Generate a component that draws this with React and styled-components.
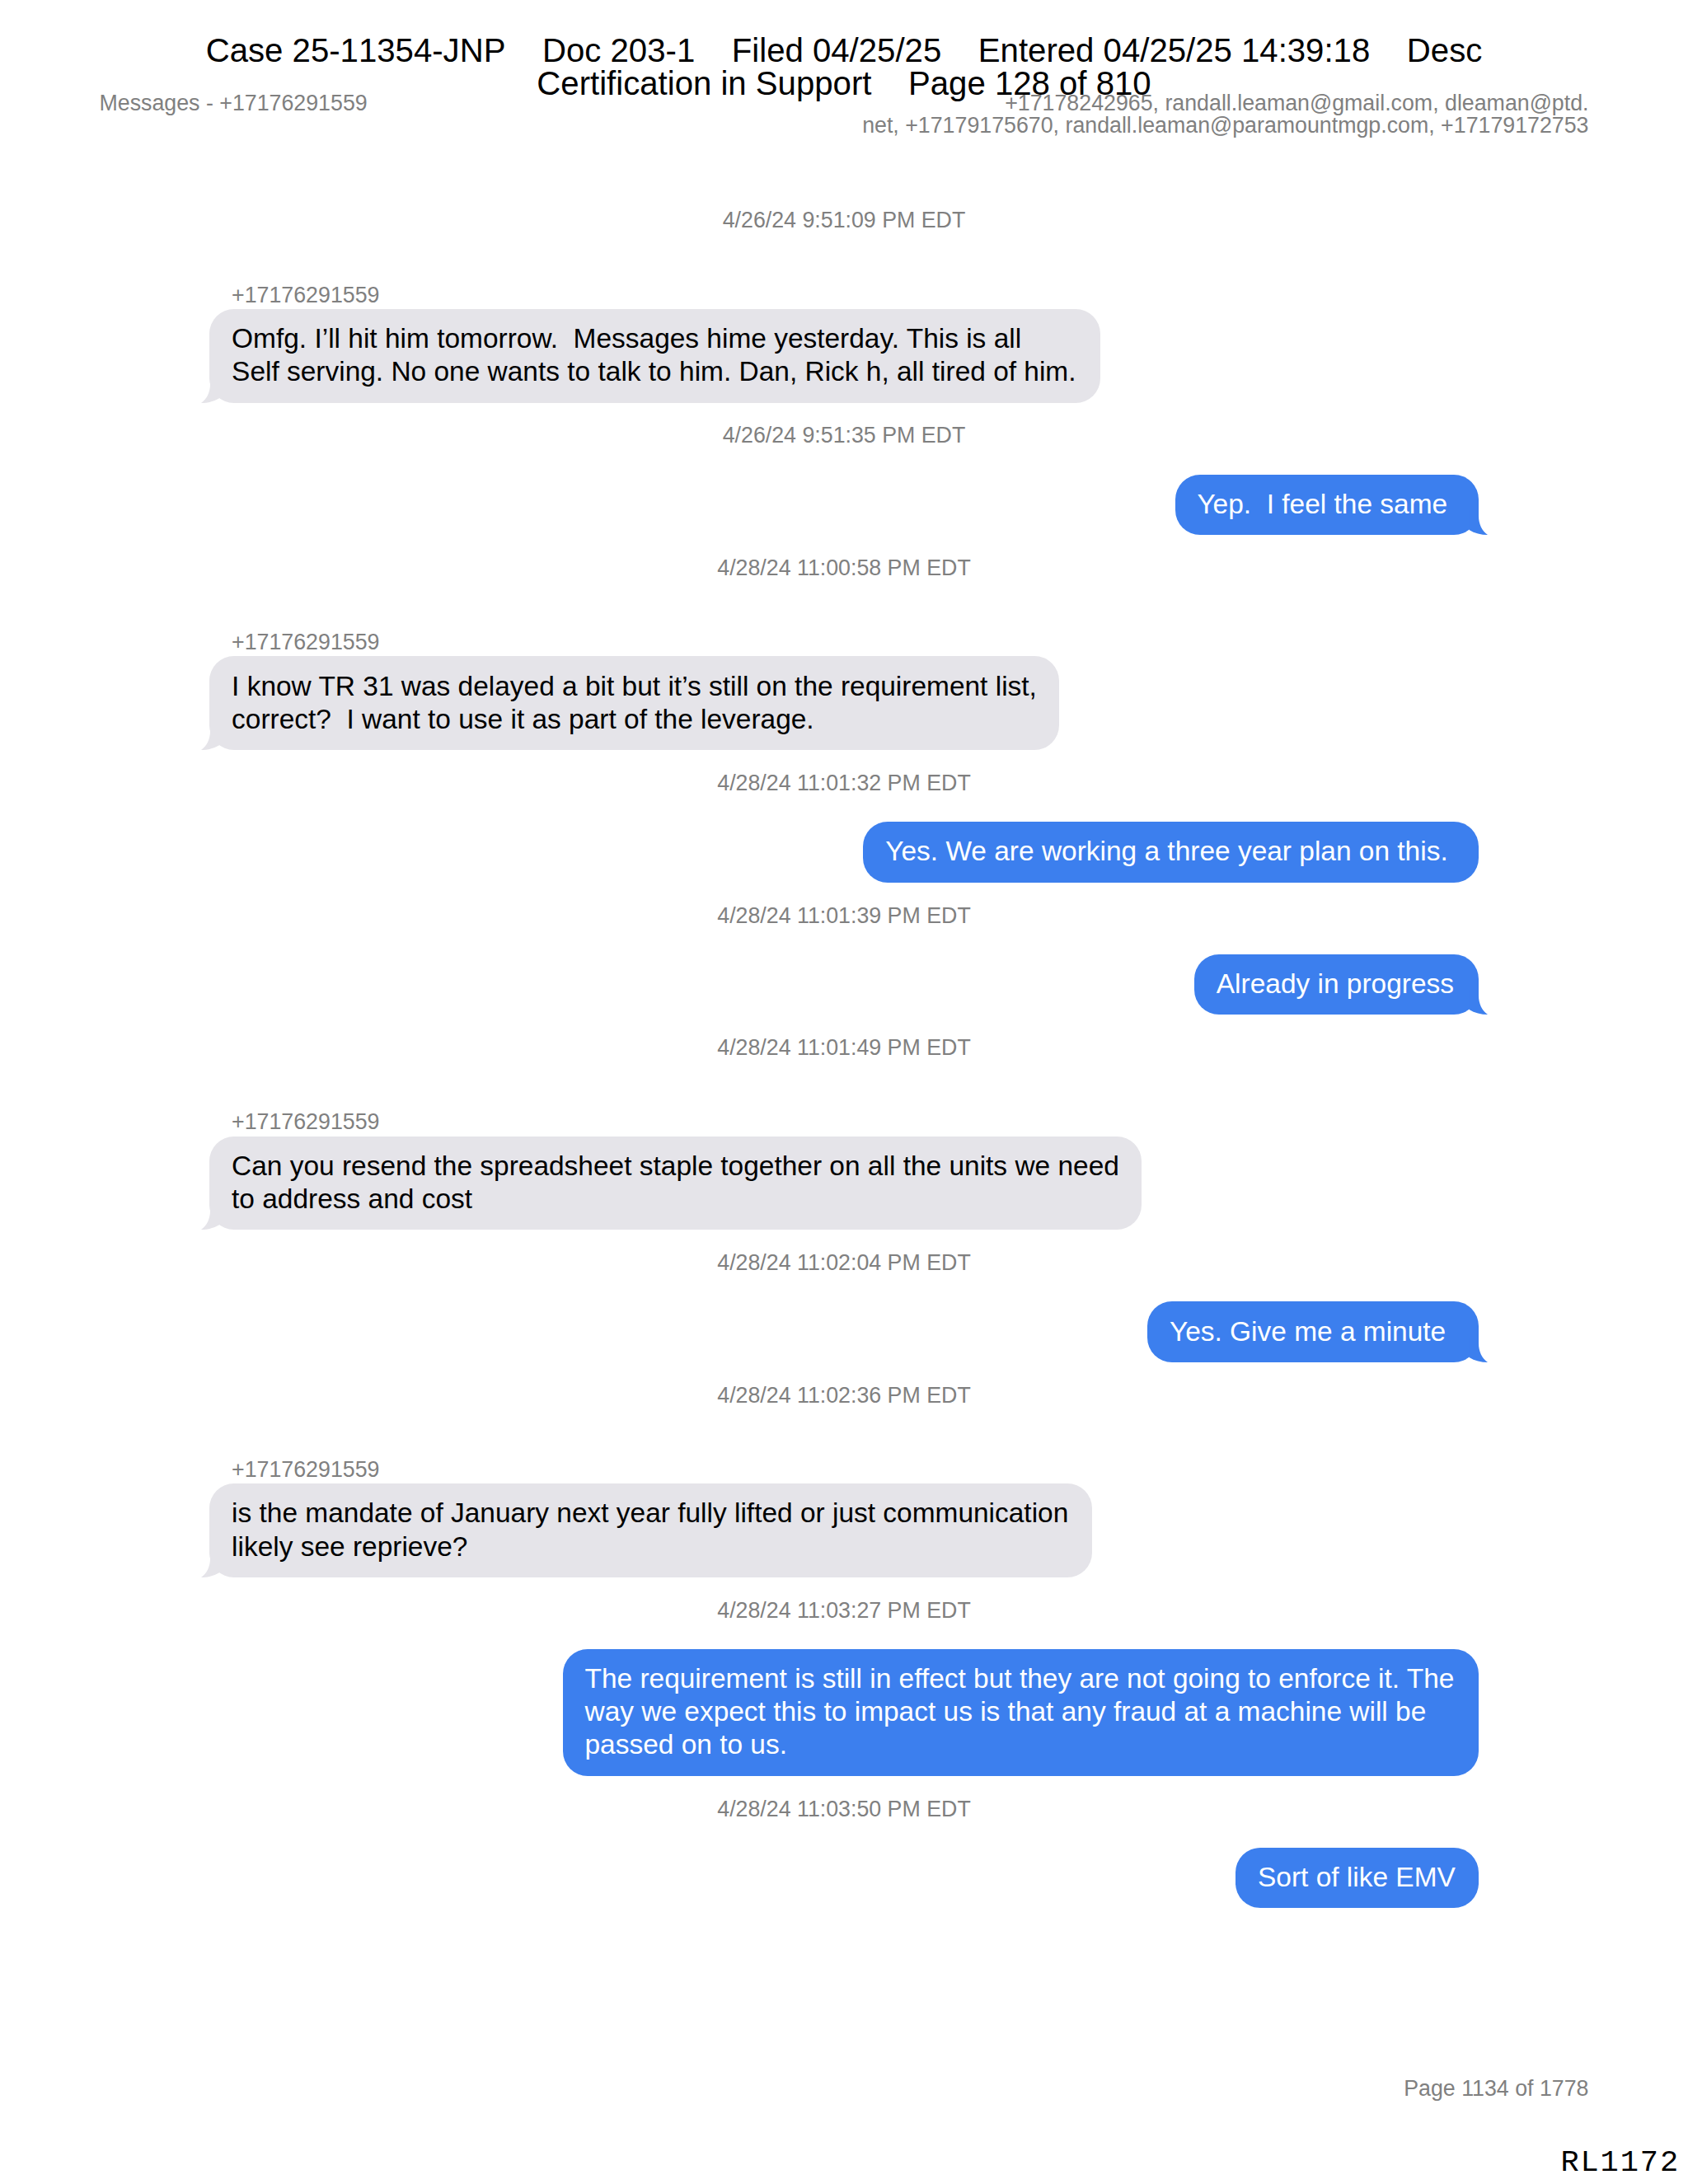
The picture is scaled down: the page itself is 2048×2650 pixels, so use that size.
import React from 'react';
import styled, { createGlobalStyle, css } from 'styled-components';

const colors = {
  received: '#e5e4e9',
  sent: '#3c7fee',
  muted: '#808080',
};

// The page is US Letter (612pt wide) laid out on 2048px
const pt = (n) => `${((n * 2048) / 612).toFixed(2)}px`;

const GlobalStyle = createGlobalStyle`
  body {
    margin: 0;
    background: #fff;
    font-family: "Liberation Sans", Arial, sans-serif;
  }
`;

const Page = styled.div`
  position: relative;
  box-sizing: border-box;
  width: 2048px;
  height: 2650px;
  overflow: hidden;
  display: flex;
  flex-direction: column;
  background: #fff;
`;

/* Court filing stamp, printed over the top of the page */
const FilingStamp = styled.div`
  position: absolute;
  top: 42px;
  left: 0;
  right: 0;
  font-size: 40.15px;
  line-height: 40.15px;
  font-kerning: none;
  text-align: center;
  white-space: pre;
  color: #000;
`;

const PageHeader = styled.header`
  display: flex;
  justify-content: space-between;
  box-sizing: border-box;
  height: 254.4px;
  padding: 112px 120.5px 0;
  font-size: 26.77px;
  line-height: 26.77px;
  color: ${colors.muted};
`;

const Participants = styled.div`
  text-align: right;
  white-space: pre;
`;

const Conversation = styled.main`
  flex: 1;
  padding: 0 254.3px;
`;

const Timestamp = styled.div`
  font-size: 26.77px;
  line-height: 26.77px;
  text-align: center;
  color: ${colors.muted};
`;

const Message = styled.div`
  display: flex;
  flex-direction: column;
  align-items: ${({ $sent }) => ($sent ? 'flex-end' : 'flex-start')};
  padding: ${({ $sent }) => ($sent ? '33.46px' : '63.57px')} 0 26.77px;
`;

const Sender = styled.div`
  margin-bottom: 3.35px;
  padding-left: 26.77px;
  font-size: 26.77px;
  line-height: 26.77px;
  color: ${colors.muted};
`;

const Bubble = styled.div`
  position: relative;
  box-sizing: border-box;
  width: ${({ $width }) => pt($width)};
  padding: 16.3px 0 17.16px 26.77px;
  border-radius: 30px;
  font-size: 33.46px;
  line-height: 40.15px;
  white-space: pre;
  background: ${colors.received};
  color: #000;

  ${({ $sent }) =>
    $sent &&
    css`
      background: ${colors.sent};
      color: #fff;
    `}
`;

const TailShape = styled.svg`
  position: absolute;
  bottom: 0;
  width: 26px;
  height: 30px;
  fill: ${({ $sent }) => ($sent ? colors.sent : colors.received)};
  ${({ $sent }) => ($sent ? 'right: -11px;' : 'left: -10px; transform: scaleX(-1);')}
`;

const PageFooter = styled.footer`
  display: flex;
  flex-direction: column;
  align-items: flex-end;
`;

const PageNumber = styled.div`
  padding-right: 120.5px;
  font-size: 26.77px;
  line-height: 26.77px;
  color: ${colors.muted};
`;

const BatesNumber = styled.div`
  margin-top: 51px;
  padding-right: 10px;
  font-family: "Courier New", "Liberation Mono", monospace;
  font-size: 37px;
  letter-spacing: 1.89px;
  line-height: 51px;
  color: #000;
`;

const contact = '+17176291559';

// width is the bubble width in points
const messages = [
  {
    time: '4/26/24 9:51:09 PM EDT',
    width: 323,
    tail: true,
    text: 'Omfg. I’ll hit him tomorrow.  Messages hime yesterday. This is all\nSelf serving. No one wants to talk to him. Dan, Rick h, all tired of him.',
  },
  { time: '4/26/24 9:51:35 PM EDT', width: 110, sent: true, tail: true, text: 'Yep.  I feel the same' },
  {
    time: '4/28/24 11:00:58 PM EDT',
    width: 308,
    tail: true,
    text: 'I know TR 31 was delayed a bit but it’s still on the requirement list,\ncorrect?  I want to use it as part of the leverage.',
  },
  { time: '4/28/24 11:01:32 PM EDT', width: 223, sent: true, text: 'Yes. We are working a three year plan on this.' },
  { time: '4/28/24 11:01:39 PM EDT', width: 103, sent: true, tail: true, text: 'Already in progress' },
  {
    time: '4/28/24 11:01:49 PM EDT',
    width: 338,
    tail: true,
    text: 'Can you resend the spreadsheet staple together on all the units we need\nto address and cost',
  },
  { time: '4/28/24 11:02:04 PM EDT', width: 120, sent: true, tail: true, text: 'Yes. Give me a minute' },
  {
    time: '4/28/24 11:02:36 PM EDT',
    width: 320,
    tail: true,
    text: 'is the mandate of January next year fully lifted or just communication\nlikely see reprieve?',
  },
  {
    time: '4/28/24 11:03:27 PM EDT',
    width: 332,
    sent: true,
    text: 'The requirement is still in effect but they are not going to enforce it. The\nway we expect this to impact us is that any fraud at a machine will be\npassed on to us.',
  },
  { time: '4/28/24 11:03:50 PM EDT', width: 88, sent: true, text: 'Sort of like EMV' },
];

const Tail = ({ sent }) => (
  <TailShape $sent={sent} viewBox="0 0 26 30">
    <path d="M3.5 0H15V7C15 17 19 25 26 30C18 30 10 28 3.5 24Z" />
  </TailShape>
);

const App = () => (
  <>
    <GlobalStyle />
    <Page>
      <PageHeader>
        <div>Messages - {contact}</div>
        <Participants>
          {'+17178242965, randall.leaman@gmail.com, dleaman@ptd.\nnet, +17179175670, randall.leaman@paramountmgp.com, +17179172753'}
        </Participants>
      </PageHeader>
      <FilingStamp>
        {'Case 25-11354-JNP    Doc 203-1    Filed 04/25/25    Entered 04/25/25 14:39:18    Desc\nCertification in Support    Page 128 of 810'}
      </FilingStamp>
      <Conversation>
        {messages.map(({ time, width, sent, tail, text }) => (
          <React.Fragment key={time}>
            <Timestamp>{time}</Timestamp>
            <Message $sent={sent}>
              {!sent && <Sender>{contact}</Sender>}
              <Bubble $sent={sent} $width={width}>
                {text}
                {tail && <Tail sent={sent} />}
              </Bubble>
            </Message>
          </React.Fragment>
        ))}
      </Conversation>
      <PageFooter>
        <PageNumber>Page 1134 of 1778</PageNumber>
        <BatesNumber>RL1172</BatesNumber>
      </PageFooter>
    </Page>
  </>
);

export default App;
